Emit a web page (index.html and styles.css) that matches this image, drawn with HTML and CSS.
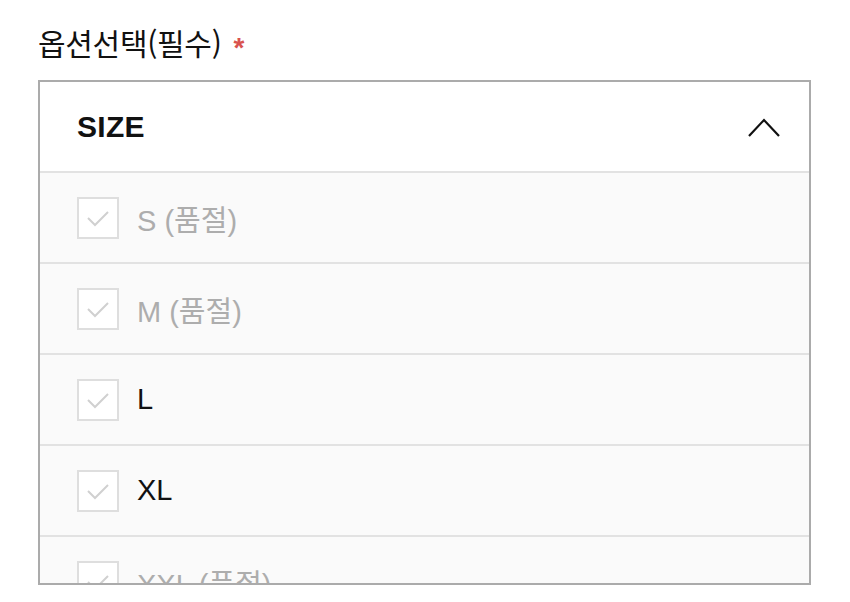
FILE: index.html
```html
<!DOCTYPE html>
<html lang="ko">
<head>
<meta charset="utf-8">
<link rel="stylesheet" href="styles.css">
</head>
<body>
<div class="page">
  <div class="label">옵션선택(필수) <span class="req">*</span></div>
  <div class="select">
    <div class="head">
      <span class="head-title">SIZE</span>
      <svg class="chev" width="32" height="19" viewBox="0 0 32 19"><path d="M1 18 L16 2 L31 18" fill="none" stroke="#111" stroke-width="2.2"/></svg>
    </div>
    <div class="row soldout"><span class="box"><svg width="24" height="18" viewBox="0 0 24 18"><path d="M2 9 L9 16 L22 3" fill="none" stroke="#d0d0d0" stroke-width="2"/></svg></span><span class="opt">S (품절)</span></div>
    <div class="row soldout"><span class="box"><svg width="24" height="18" viewBox="0 0 24 18"><path d="M2 9 L9 16 L22 3" fill="none" stroke="#d0d0d0" stroke-width="2"/></svg></span><span class="opt">M (품절)</span></div>
    <div class="row"><span class="box"><svg width="24" height="18" viewBox="0 0 24 18"><path d="M2 9 L9 16 L22 3" fill="none" stroke="#d0d0d0" stroke-width="2"/></svg></span><span class="opt">L</span></div>
    <div class="row"><span class="box"><svg width="24" height="18" viewBox="0 0 24 18"><path d="M2 9 L9 16 L22 3" fill="none" stroke="#d0d0d0" stroke-width="2"/></svg></span><span class="opt">XL</span></div>
    <div class="row soldout"><span class="box"><svg width="24" height="18" viewBox="0 0 24 18"><path d="M2 9 L9 16 L22 3" fill="none" stroke="#d0d0d0" stroke-width="2"/></svg></span><span class="opt">XXL (품절)</span></div>
  </div>
</div>
</body>
</html>
```
FILE: styles.css
```css
html, body {
  margin: 0;
  padding: 0;
  background: #fff;
}
body {
  font-family: "Liberation Sans", "Noto Sans CJK KR", sans-serif;
  color: #111;
}
.page {
  padding: 22px 0 0 38px;
  width: 773px;
}
.label {
  font-family: "Noto Sans CJK KR", sans-serif;
  font-size: 30px;
  line-height: 40px;
  height: 58px;
  color: #111;
  letter-spacing: -0.3px;
}
.req {
  color: #d9534f;
  font-size: 28px;
  font-family: "Liberation Sans", sans-serif;
  font-weight: bold;
  margin-left: 4px;
  vertical-align: -2px;
}
.select {
  border: 2px solid #ababab;
  height: 501px;
  overflow: hidden;
  box-sizing: content-box;
  width: 769px;
}
.head {
  height: 89px;
  display: flex;
  align-items: center;
  justify-content: space-between;
  padding: 0 29px 0 37px;
  background: #fff;
  border-bottom: 2px solid #e2e2e2;
}
.head-title {
  font-weight: bold;
  font-size: 30px;
  letter-spacing: 0.3px;
  margin-top: 0;
}
.chev {
  display: block;
  margin-top: 2px;
}
.row {
  height: 89px;
  display: flex;
  align-items: center;
  padding-left: 37px;
  background: #fafafa;
  border-bottom: 2px solid #e2e2e2;
}
.box {
  width: 38px;
  height: 38px;
  border: 2px solid #dedede;
  background: #fff;
  display: flex;
  align-items: center;
  justify-content: center;
  flex: none;
}
.opt {
  margin-left: 18px;
  font-family: "Liberation Sans", "Noto Sans CJK KR", sans-serif;
  font-size: 29px;
  color: #111;
}
.soldout .opt {
  color: #adadad;
}
```
